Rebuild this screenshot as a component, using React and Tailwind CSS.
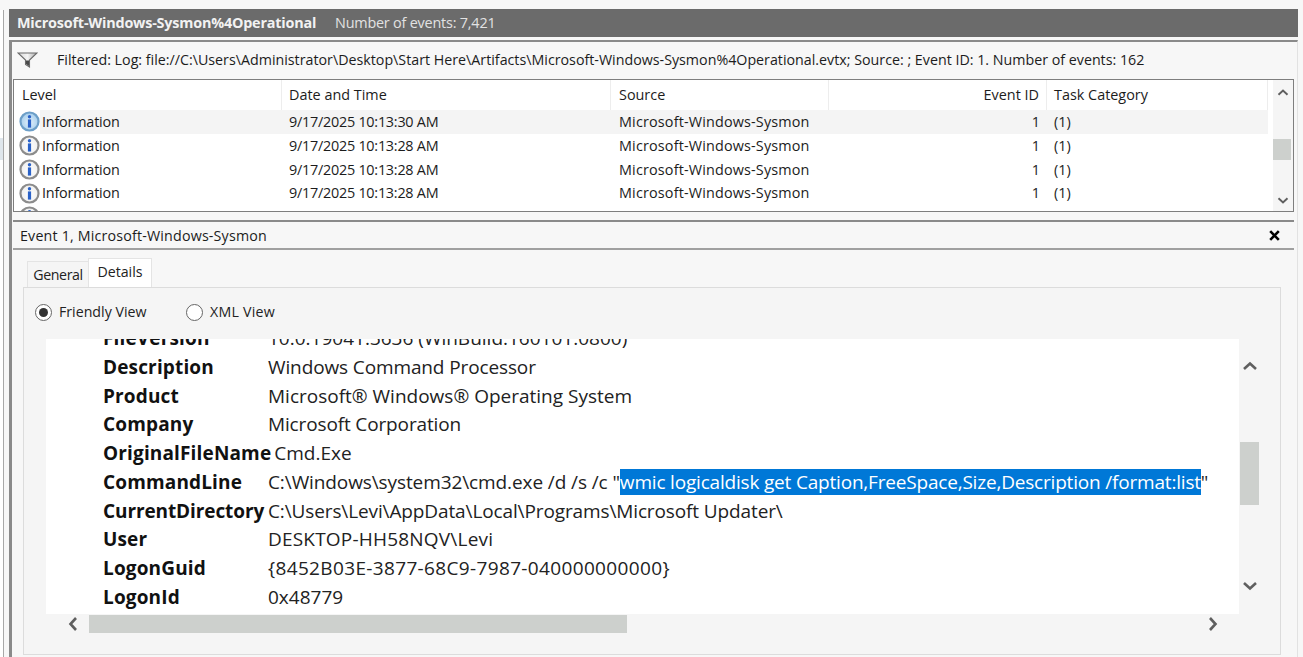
const FONT = "font-['Open_Sans','Noto_Sans',sans-serif]";

function InfoIcon({ selected, id }) {
  return (
    <svg width="21" height="21" viewBox="0 0 21 21" className="shrink-0">
      <defs>
        <radialGradient id={id} cx="0.5" cy="0.55" r="0.6">
          <stop offset="0" stopColor={selected ? "#e4f1fb" : "#ffffff"} />
          <stop offset="1" stopColor={selected ? "#9cc8ea" : "#ececec"} />
        </radialGradient>
      </defs>
      <circle cx="10.5" cy="10.5" r="9" fill={`url(#${id})`} stroke={selected ? "#6d9fc8" : "#8c8c8c"} strokeWidth="2.2" />
      <circle cx="10.5" cy="5.8" r="1.7" fill="#2a62c8" />
      <rect x="8.9" y="8.4" width="3.2" height="8.2" fill="#2a62c8" />
    </svg>
  );
}

function Chevron({ dir, className = "", small }) {
  const d = {
    up: "M2 9 L8 3.5 L14 9",
    down: "M2 3 L8 8.5 L14 3",
    left: "M9 2 L3.5 8 L9 14",
    right: "M3 2 L8.5 8 L3 14",
  }[dir];
  const horizontal = dir === "left" || dir === "right";
  const long = small ? 12 : 16;
  const short = small ? 9 : 12;
  return (
    <svg width={horizontal ? short : long} height={horizontal ? long : short} viewBox={horizontal ? "0 0 12 16" : "0 0 16 12"} className={className}>
      <path d={d} fill="none" stroke="#5f5f5f" strokeWidth="2.6" />
    </svg>
  );
}

function ListRow({ selected, id }) {
  return (
    <div className="flex h-[23.8px] items-center text-[14.4px] text-[#1c1c1c] shrink-0 whitespace-nowrap">
      <div className="w-[26px] pl-[5px] shrink-0">
        <InfoIcon selected={selected} id={id} />
      </div>
      <div className={`flex flex-1 h-full items-center ${selected ? "bg-[#f4f4f4]" : ""}`}>
        <div className="w-[242px] pl-[2px] tracking-[-0.2px]">Information</div>
        <div className="w-[329px] pl-[7px] tracking-[-0.25px]">9/17/2025 10:13:{selected ? "30" : "28"} AM</div>
        <div className="w-[218px] pl-[8px] tracking-[0.16px]">Microsoft-Windows-Sysmon</div>
        <div className="w-[218px] pr-[7px] text-right">1</div>
        <div className="pl-[7px]">(1)</div>
      </div>
    </div>
  );
}

function Detail({ name, value, nameClass = "tracking-[0.15px]", valueClass = "", children }) {
  return (
    <div className="flex h-[28.75px] items-center shrink-0 whitespace-nowrap">
      <div className={`min-w-[165px] pr-[3px] font-bold text-[#111] ${nameClass}`}>{name}</div>
      <div className={`text-[#222] ${valueClass}`}>{value}{children}</div>
    </div>
  );
}

export default function App() {
  return (
    <div className={`${FONT} w-[1303px] h-[657px] overflow-hidden bg-[#f7f7f7] flex pt-[9px]`}>
      <div className="w-[9px] shrink-0 flex flex-col pt-[1px]">
        <div className="w-[4px] h-full border-r border-[#a8a8a8] bg-white flex flex-col pt-[128px]">
          <div className="h-[22px] bg-[#dfe6ec]" />
        </div>
      </div>
      <div className="w-[1289px] flex flex-col">
        <div className="h-[28px] bg-[#6b6b6b] flex items-center pl-[8px] text-[14.4px] whitespace-nowrap shrink-0">
          <span className="font-bold text-[#f2f2f2] w-[318px] tracking-[-0.2px]">Microsoft-Windows-Sysmon%4Operational</span>
          <span className="text-[#e2e2e2] tracking-[-0.2px]">Number of events: 7,421</span>
        </div>
        <div className="mt-[3px] flex-1 flex flex-col border-t-[2px] border-l-[3px] border-t-[#8a8a8a] border-l-[#8a8a8a] border-r border-r-[#e2e2e2] pl-[1px] pr-[3px]">
          <div className="h-[37px] pb-[1px] flex items-center shrink-0 text-[14.25px] text-[#1c1c1c] whitespace-nowrap">
            <svg width="21" height="16" viewBox="0 0 21 16" className="ml-[4px] shrink-0">
              <defs>
                <linearGradient id="funnel" x1="0" y1="0" x2="1" y2="0">
                  <stop offset="0" stopColor="#d6d6d6" />
                  <stop offset="0.5" stopColor="#f4f4f4" />
                  <stop offset="1" stopColor="#a8a8a8" />
                </linearGradient>
              </defs>
              <path d="M1 1 H20 L12.5 8 V15 L8.5 12.5 V8 Z" fill="url(#funnel)" stroke="#6a6a6a" strokeWidth="1.1" />
              <path d="M9 8.5 V12 L12 14 V8.5 Z" fill="#4a4a4a" />
            </svg>
            <span className="ml-[19px]">Filtered: Log: file://C:\Users\Administrator\Desktop\Start Here\Artifacts\Microsoft-Windows-Sysmon%4Operational.evtx; Source: ; Event ID: 1. Number of events: 162</span>
          </div>
          <div className="h-[133px] shrink-0 flex border border-[#7e7e7e] bg-white overflow-hidden">
            <div className="flex-1 min-w-0 flex flex-col overflow-hidden mr-[5px]">
              <div className="h-[30px] flex items-center text-[14.4px] text-[#1c1c1c] shrink-0 whitespace-nowrap">
                <div className="w-[268px] h-full flex items-center pl-[8px] border-r border-[#ededed]">Level</div>
                <div className="w-[329px] h-full flex items-center pl-[7px] border-r border-[#ededed]">Date and Time</div>
                <div className="w-[218px] h-full flex items-center pl-[8px] border-r border-[#ededed]">Source</div>
                <div className="w-[218px] h-full flex items-center justify-end pr-[7px] border-r border-[#ededed]">Event ID</div>
                <div className="flex-1 h-full flex items-center pl-[7px] border-r border-[#ededed]">Task Category</div>
              </div>
              <ListRow selected id="ia" />
              <ListRow id="ib" />
              <ListRow id="ic" />
              <ListRow id="id" />
              <div className="pl-[5px] pt-[1px] shrink-0">
                <InfoIcon id="ie" />
              </div>
            </div>
            <div className="w-[20px] shrink-0 bg-[#f5f5f5] flex flex-col items-center">
              <Chevron dir="up" small className="mt-[8px]" />
              <div className="w-[18px] h-[21px] bg-[#cdd0cd] mt-[42px] self-start" />
              <Chevron dir="down" small className="mt-[36px]" />
            </div>
          </div>
          <div className="mt-[8px] flex-1 flex flex-col border-t-[2px] border-[#8a8a8a]">
            <div className="h-[28px] pt-[1px] flex items-center justify-between shrink-0 border-b-[2px] border-[#a0a0a0] text-[14.25px] text-[#1c1c1c] pl-[7px] pr-[14px]">
              <span className="tracking-[0.18px]">Event 1, Microsoft-Windows-Sysmon</span>
              <svg width="11" height="11" viewBox="0 0 11 11">
                <path d="M1.2 1.2 L9.8 9.8 M9.8 1.2 L1.2 9.8" stroke="#000" strokeWidth="2.6" />
              </svg>
            </div>
            <div className="flex pl-[14px] mt-[8px] items-end shrink-0 text-[14.2px] text-[#222]">
              <div className="h-[26px] w-[62px] flex items-center justify-center bg-[#f5f5f5] border border-[#e4e4e4] border-b-0 tracking-[-0.4px]">General</div>
              <div className="h-[29px] w-[64px] flex items-center justify-center bg-white border border-[#e4e4e4] border-b-0 pb-[3px] -ml-[1px]">Details</div>
            </div>
            <div className="w-[1258px] ml-[10px] h-[368px] flex flex-col border border-[#dcdcdc] bg-[#f5f5f5]">
              <div className="h-[51px] pb-[3px] flex items-center shrink-0 pl-[11px] text-[14.2px] text-[#222] whitespace-nowrap">
                <span className="w-[17px] h-[17px] rounded-full border border-[#666] bg-white flex items-center justify-center">
                  <span className="w-[9px] h-[9px] rounded-full bg-[#333]" />
                </span>
                <span className="ml-[7px] w-[110px]">Friendly View</span>
                <span className="w-[17px] h-[17px] rounded-full border border-[#666] bg-white ml-[17px]" />
                <span className="ml-[7px] tracking-[0.25px]">XML View</span>
              </div>
              <div className="ml-[22px] flex shrink-0 h-[294px]">
                <div className="w-[1193px] flex flex-col shrink-0">
                  <div className="h-[275px] bg-white overflow-hidden flex flex-col pl-[57px] text-[19px] shrink-0">
                    <div className="-mt-[15px]" />
                    <Detail name="FileVersion" value="10.0.19041.3636 (WinBuild.160101.0800)" />
                    <Detail name="Description" value="Windows Command Processor" valueClass="tracking-[-0.12px]" />
                    <Detail name="Product" value="Microsoft® Windows® Operating System" />
                    <Detail name="Company" value="Microsoft Corporation" valueClass="tracking-[-0.14px]" />
                    <Detail name="OriginalFileName" value="Cmd.Exe" />
                    <Detail name="CommandLine" value={'C:\\Windows\\system32\\cmd.exe /d /s /c "'} valueClass="tracking-[-0.1px]">
                      <span className="bg-[#0078d7] text-white tracking-[-0.19px]">wmic logicaldisk get Caption,FreeSpace,Size,Description /format:list</span>"
                    </Detail>
                    <Detail name="CurrentDirectory" nameClass="tracking-[-0.1px]" value={'C:\\Users\\Levi\\AppData\\Local\\Programs\\Microsoft Updater\\'} valueClass="tracking-[-0.12px]" />
                    <Detail name="User" value={'DESKTOP-HH58NQV\\Levi'} valueClass="tracking-[0.2px]" />
                    <Detail name="LogonGuid" value="{8452B03E-3877-68C9-7987-040000000000}" valueClass="tracking-[0.35px]" />
                    <Detail name="LogonId" value="0x48779" />
                  </div>
                  <div className="h-[19px] flex items-center shrink-0">
                    <Chevron dir="left" className="ml-[21px]" />
                    <div className="ml-[10px] w-[538px] h-[18px] bg-[#cdd0cd]" />
                    <Chevron dir="right" className="ml-[580px]" />
                  </div>
                </div>
                <div className="w-[19px] ml-[1px] flex flex-col items-center h-[275px] shrink-0">
                  <Chevron dir="up" className="mt-[21px]" />
                  <div className="w-[19px] h-[63px] bg-[#cdd0cd] mt-[70px] shrink-0" />
                  <Chevron dir="down" className="mt-[75px]" />
                </div>
              </div>
            </div>
          </div>
        </div>
      </div>
    </div>
  );
}
